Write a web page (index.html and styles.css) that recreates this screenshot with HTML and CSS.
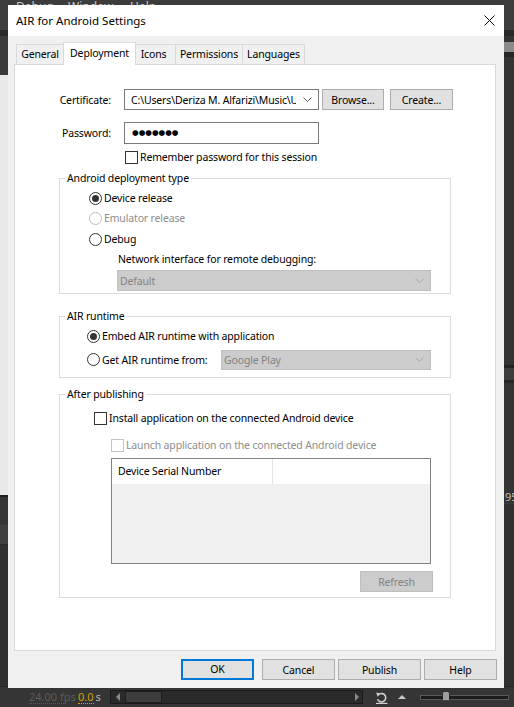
FILE: index.html
```html
<!DOCTYPE html>
<html lang="en">
<head>
<meta charset="utf-8">
<title>AIR for Android Settings</title>
<link rel="stylesheet" href="styles.css">
</head>
<body>
<div class="app">
  <div class="menubar">
    <span class="menu m-debug">Debug</span>
    <span class="menu m-window">Window</span>
    <span class="menu m-help">Help</span>
  </div>
  <div class="divider"></div>
  <div class="workspace">
    <div class="side-left">
      <div class="sl-a"></div>
      <div class="sl-b"></div>
      <div class="sl-c"></div>
      <div class="sl-d"></div>
      <div class="sl-e"></div>
      <div class="sl-f"></div>
    </div>
    <div class="side-right">
      <div class="sr-a"></div>
      <div class="sr-b"></div>
      <div class="sr-c"></div>
      <div class="sr-d"></div>
      <div class="sr-e"></div>
      <div class="sr-f"></div>
      <div class="sr-g"></div>
      <div class="sr-h"></div>
      <div class="sr-i">95</div>
      <div class="sr-j"></div>
    </div>
  </div>
  <div class="timeline">
    <span class="fps">24.00 fps</span>
    <span class="time"><span class="time-val">0.0</span><span class="time-unit">s</span></span>
    <div class="hscroll">
      <span class="arr arr-l"></span>
      <span class="thumb"></span>
      <span class="track"></span>
      <span class="arr arr-r"></span>
    </div>
    <svg class="loop" width="13" height="13" viewBox="0 0 13 13">
      <path d="M4.2 3.2 A4.2 4.2 0 1 1 2.6 8.2" fill="none" stroke="#cfcfcf" stroke-width="1.6"/>
      <path d="M1.2 1.6 L5.6 2.4 L2.6 5.8 Z" fill="#cfcfcf"/>
      <line x1="1" y1="12.4" x2="12.5" y2="12.4" stroke="#cfcfcf" stroke-width="1.2"/>
    </svg>
    <span class="up-tri"></span>
    <div class="zoom-slider">
      <span class="slider-thumb"></span>
    </div>
  </div>

  <div class="dialog">
    <div class="titlebar">
      <span class="title">AIR for Android Settings</span>
      <svg class="close" width="11" height="11" viewBox="0 0 11 11">
        <path d="M0.5 0.5 L10.5 10.5 M10.5 0.5 L0.5 10.5" stroke="#000" stroke-width="1" fill="none"/>
      </svg>
    </div>
    <div class="dlg-body">
      <div class="tabs">
        <div class="tab t-general">General</div>
        <div class="tab t-deploy active">Deployment</div>
        <div class="tab t-icons">Icons</div>
        <div class="tab t-perm">Permissions</div>
        <div class="tab t-lang">Languages</div>
      </div>
      <div class="panel">
        <div class="row cert-row">
          <span class="lbl">Certificate:</span>
          <div class="combo">
            <span class="combo-text">C:\Users\Deriza M. Alfarizi\Music\Un</span>
            <svg class="chev" width="9" height="5" viewBox="0 0 9 5"><path d="M0.5 0.5 L4.5 4.5 L8.5 0.5" fill="none" stroke="#606060" stroke-width="1"/></svg>
          </div>
          <button class="btn btn-browse">Browse...</button>
          <button class="btn btn-create">Create...</button>
        </div>
        <div class="row pw-row">
          <span class="lbl">Password:</span>
          <div class="pw-input"><span class="dots">●●●●●●●</span></div>
        </div>
        <div class="chk-row remember">
          <span class="chk"></span><span class="chk-text">Remember password for this session</span>
        </div>

        <fieldset class="group g-deploy">
          <legend>Android deployment type</legend>
          <div class="opt opt-1"><span class="radio on"></span><span>Device release</span></div>
          <div class="opt opt-2 disabled"><span class="radio"></span><span>Emulator release</span></div>
          <div class="opt opt-3"><span class="radio"></span><span>Debug</span></div>
          <div class="net-label">Network interface for remote debugging:</div>
          <div class="dsel sel-default">
            <span>Default</span>
            <svg class="chev" width="9" height="5" viewBox="0 0 9 5"><path d="M0.5 0.5 L4.5 4.5 L8.5 0.5" fill="none" stroke="#a8a8a8" stroke-width="1"/></svg>
          </div>
        </fieldset>

        <fieldset class="group g-runtime">
          <legend>AIR runtime</legend>
          <div class="opt opt-embed"><span class="radio on"></span><span>Embed AIR runtime with application</span></div>
          <div class="opt opt-get">
            <span class="radio"></span><span>Get AIR runtime from:</span>
            <div class="dsel sel-play">
              <span>Google Play</span>
              <svg class="chev" width="9" height="5" viewBox="0 0 9 5"><path d="M0.5 0.5 L4.5 4.5 L8.5 0.5" fill="none" stroke="#a8a8a8" stroke-width="1"/></svg>
            </div>
          </div>
        </fieldset>

        <fieldset class="group g-after">
          <legend>After publishing</legend>
          <div class="chk-row install"><span class="chk"></span><span class="chk-text">Install application on the connected Android device</span></div>
          <div class="chk-row launch disabled"><span class="chk"></span><span class="chk-text">Launch application on the connected Android device</span></div>
          <div class="devlist">
            <div class="devlist-head">
              <span class="col col-1">Device Serial Number</span>
              <span class="col col-2"></span>
            </div>
            <div class="devlist-body"></div>
          </div>
          <button class="btn btn-refresh" disabled>Refresh</button>
        </fieldset>
      </div>
      <div class="footer">
        <button class="btn btn-ok">OK</button>
        <button class="btn btn-cancel">Cancel</button>
        <button class="btn btn-publish">Publish</button>
        <button class="btn btn-help">Help</button>
      </div>
    </div>
  </div>
</div>
</body>
</html>
```
FILE: styles.css
```css
* { box-sizing: border-box; }
html, body { margin: 0; padding: 0; }
body {
  background: #333333;
  font-family: "Noto Sans", "Open Sans", sans-serif;
  font-size: 10.5px;
  letter-spacing: -0.15px;
  color: #000;
}

.app {
  position: relative;
  width: 514px;
  height: 707px;
  overflow: hidden;
  display: flex;
  flex-direction: column;
  background: #333333;
}

/* ---------- background application ---------- */
.menubar {
  height: 30px;
  background: #3c3c3c;
  display: flex;
  padding-left: 16px;
  font-size: 12px;
  line-height: 14px;
  color: #c8c8c8;
  letter-spacing: 0;
}
.m-debug { width: 52px; }
.m-window { width: 62px; }
.divider { height: 6px; background: #282828; }

.workspace {
  flex: 1;
  display: flex;
  justify-content: space-between;
}
.side-left { width: 8px; display: flex; flex-direction: column; }
.sl-a { height: 39px; background: #3a3a3a; }
.sl-b { height: 420px; background: #e9e9e9; }
.sl-c { height: 2px; background: #1e1e1e; }
.sl-d { height: 28px; background: #363636; }
.sl-e { height: 20px; background: #404040; border-bottom: 1px solid #2a2a2a; }
.sl-f { flex: 1; background: #2f2f2f; }

.side-right { width: 10px; display: flex; flex-direction: column; }
.sr-a { height: 6px; background: #333; }
.sr-b { height: 10px; background: #8b8b8b; }
.sr-c { height: 5px; background: #262626; }
.sr-d { height: 308px; background: #333; }
.sr-e { height: 3px; background: #222; }
.sr-f { height: 12px; background: #3c3c3c; }
.sr-g { height: 3px; background: #262626; }
.sr-h { height: 107px; background: #333; }
.sr-i {
  height: 13px;
  background: #333;
  color: #bdbdbd;
  font-size: 11px;
  line-height: 13px;
  padding-left: 1px;
  overflow: hidden;
  white-space: nowrap;
  letter-spacing: 0;
}
.sr-j { flex: 1; background: #303030; border-top: 1px solid #3c3c3c; }

.timeline {
  height: 21px;
  background: #353535;
  border-top: 1px solid #262626;
  display: flex;
  align-items: center;
  font-size: 11px;
  letter-spacing: 0;
}
.fps {
  margin-left: 29px;
  width: 37px;
  color: #5c5c5c;
  line-height: 12px;
  border-bottom: 1px dotted #5c5c5c;
  white-space: nowrap;
}
.time {
  margin-left: 12px;
  width: 20px;
  display: flex;
  white-space: nowrap;
}
.time-val {
  color: #d0a000;
  line-height: 12px;
  border-bottom: 1px dotted #d0a000;
}
.time-unit { color: #b8b8b8; margin-left: 2px; line-height: 12px; }

.hscroll {
  margin-left: 12px;
  width: 253px;
  height: 14px;
  background: #2a2a2a;
  border: 1px solid #1a1a1a;
  display: flex;
  align-items: center;
}
.arr { width: 0; height: 0; border-top: 4px solid transparent; border-bottom: 4px solid transparent; }
.arr-l { border-right: 4px solid #8a8a8a; margin-left: 5px; }
.arr-r { border-left: 4px solid #8a8a8a; margin-right: 3px; }
.thumb {
  margin-left: 5px;
  width: 37px;
  height: 12px;
  background: #3d3d3d;
  border: 1px solid #1e1e1e;
}
.track { flex: 1; }
.loop { margin-left: 12px; display: block; }
.up-tri {
  margin-left: 10px;
  width: 0; height: 0;
  border-left: 4px solid transparent;
  border-right: 4px solid transparent;
  border-bottom: 4px solid #c8c8c8;
}
.zoom-slider {
  position: relative;
  margin-left: 14px;
  width: 89px;
  height: 5px;
  background: #1c1c1c;
  border: 1px solid #5a5a5a;
}
.slider-thumb {
  position: absolute;
  left: 21px;
  top: -5px;
  width: 8px;
  height: 10px;
  background: #a0a0a0;
  border: 1px solid #222;
  clip-path: polygon(50% 0, 100% 35%, 100% 100%, 0 100%, 0 35%);
}

/* ---------- dialog window ---------- */
.dialog {
  position: absolute;
  left: 8px;
  top: 5px;
  width: 496px;
  height: 683px;
  background: #f0f0f0;
  display: flex;
  flex-direction: column;
}
.titlebar {
  height: 31px;
  background: #fff;
  display: flex;
  align-items: center;
  padding-left: 8px;
}
.title {
  font-size: 11.5px;
  letter-spacing: 0;
  color: #000;
  flex: 1;
}
.close { margin-right: 9px; display: block; }

.dlg-body {
  flex: 1;
  display: flex;
  flex-direction: column;
  padding: 6px 8px 0 6px;
}

.tabs {
  display: flex;
  align-items: flex-end;
  height: 23px;
  margin-bottom: -1px;
  padding-left: 2px;
  position: relative;
  z-index: 1;
}
.tab {
  height: 21px;
  border: 1px solid #d9d9d9;
  background: #f0f0f0;
  margin-left: -1px;
  text-align: center;
  line-height: 19px;
  white-space: nowrap;
}
.t-general { width: 48px; margin-left: 0; }
.t-deploy { width: 73px; }
.t-icons { width: 41px; padding-right: 4px; }
.t-perm { width: 68px; }
.t-lang { width: 63px; }
.tab.active {
  height: 23px;
  background: #fff;
  border-bottom: none;
  line-height: 20px;
  position: relative;
  z-index: 2;
}

.panel {
  height: 587px;
  background: #fff;
  border: 1px solid #d9d9d9;
  display: flex;
  flex-direction: column;
}

.row { display: flex; align-items: center; }
.lbl { width: 96px; text-align: right; line-height: 16px; }
.cert-row { margin-top: 24px; height: 21px; }
.combo {
  margin-left: 13px;
  width: 195px;
  height: 21px;
  border: 1px solid #7a7a7a;
  background: #fff;
  display: flex;
  align-items: center;
  padding-left: 6px;
}
.combo-text {
  width: 165px;
  overflow: hidden;
  white-space: nowrap;
  line-height: 16px;
}
.combo .chev { margin-left: auto; margin-right: 6px; display: block; }

.btn {
  font-family: inherit;
  font-size: inherit;
  letter-spacing: inherit;
  color: #000;
  background: #e1e1e1;
  border: 1px solid #adadad;
  height: 21px;
  padding: 0;
  margin: 0;
  line-height: 18px;
  text-align: center;
  border-radius: 0;
}
.btn-browse { margin-left: 3px; width: 62px; }
.btn-create { margin-left: 6px; width: 63px; }

.pw-row { margin-top: 12px; height: 22px; }
.pw-input {
  margin-left: 13px;
  width: 195px;
  height: 22px;
  border: 1px solid #7a7a7a;
  background: #fff;
  display: flex;
  align-items: center;
  padding-left: 7px;
}
.dots {
  font-family: "DejaVu Sans", sans-serif;
  font-size: 7.6px;
  letter-spacing: 0;
  line-height: 10px;
  color: #000;
}

.chk-row { display: flex; align-items: center; height: 16px; }
.chk {
  width: 13px;
  height: 13px;
  border: 1px solid #333;
  background: #fff;
  flex: none;
}
.chk-text { margin-left: 2px; line-height: 16px; white-space: nowrap; }
.remember { margin-top: 5px; padding-left: 110px; }

/* group boxes */
.group {
  margin: 0 0 0 44px;
  width: 392px;
  min-width: 0;
  padding: 0;
  border: 1px solid #dcdcdc;
  display: flex;
  flex-direction: column;
}
.group legend {
  margin-left: 5px;
  padding: 0 2px;
  line-height: 16px;
}
.g-deploy { margin-top: 5px; padding-bottom: 2px; }
.g-runtime { margin-top: 14px; padding-bottom: 7px; }
.g-after { margin-top: 8px; padding-bottom: 5px; }

.opt { display: flex; align-items: center; height: 20px; white-space: nowrap; }
.radio {
  width: 13px;
  height: 13px;
  border: 1px solid #333;
  border-radius: 50%;
  background: #fff;
  margin-right: 2px;
  display: flex;
  align-items: center;
  justify-content: center;
  flex: none;
}
.radio.on::after {
  content: "";
  width: 7px;
  height: 7px;
  border-radius: 50%;
  background: #333;
}
.opt.disabled { color: #8d8d8d; }
.opt.disabled .radio { border-color: #bcbcbc; }

.g-deploy .opt { padding-left: 29px; }
.opt-1 { margin-top: 2px; }
.opt-3 { margin-top: 1px; }
.net-label { margin-top: 2px; padding-left: 58px; line-height: 16px; }

.dsel {
  height: 21px;
  background: #cccccc;
  border: 1px solid #bfbfbf;
  color: #838383;
  display: flex;
  align-items: center;
  padding-left: 2px;
}
.dsel .chev { margin-left: auto; margin-right: 6px; display: block; }
.sel-default { margin-top: 3px; margin-left: 57px; width: 314px; }

.g-runtime .opt { padding-left: 27px; }
.opt-embed { margin-top: 2px; }
.opt-get { margin-top: 3px; height: 21px; }
.sel-play { margin-left: auto; margin-right: 19px; width: 210px; height: 20px; }

.install { margin-top: 8px; padding-left: 34px; }
.launch { margin-top: 11px; padding-left: 51px; }
.chk-row.disabled { color: #8d8d8d; }
.chk-row.disabled .chk { border-color: #c4c4c4; }

.devlist {
  margin-top: 5px;
  margin-left: 51px;
  width: 320px;
  height: 106px;
  border: 1px solid #828282;
  display: flex;
  flex-direction: column;
}
.devlist-head {
  height: 25px;
  background: #fff;
  display: flex;
}
.col { line-height: 25px; white-space: nowrap; }
.col-1 { width: 161px; padding-left: 6px; border-right: 1px solid #e5e5e5; }
.col-2 { flex: 1; }
.devlist-body { flex: 1; background: #f0f0f0; }

.btn-refresh {
  margin-top: 7px;
  margin-left: 300px;
  width: 73px;
  background: #cccccc;
  border-color: #bfbfbf;
  color: #838383;
}

.footer {
  margin-top: 8px;
  margin-right: -1px;
  display: flex;
  justify-content: flex-end;
}
.btn-ok { width: 73px; border: 2px solid #0078d7; line-height: 17px; }
.btn-cancel { width: 73px; margin-left: 8px; }
.btn-publish { width: 83px; margin-left: 3px; }
.btn-help { width: 73px; margin-left: 3px; }
```
